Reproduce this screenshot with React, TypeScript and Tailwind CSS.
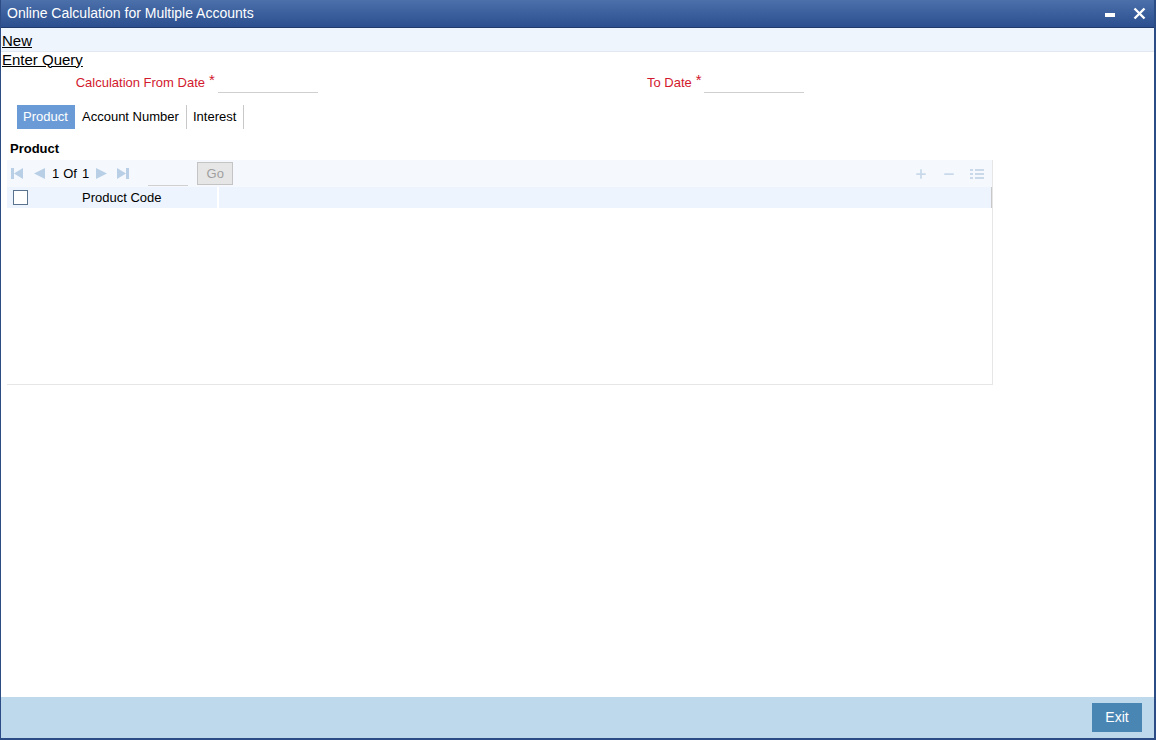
import { Plus, Minus } from 'lucide-react';

const font = { fontFamily: '"Liberation Sans", Arial, sans-serif' };

function PagerIcon({ kind }: { kind: 'first' | 'prev' | 'next' | 'last' }) {
  const fill = '#b9cfe6';
  return (
    <svg width="12" height="13" viewBox="0 0 12 13">
      {kind === 'first' && (
        <>
          <rect x="0" y="1" width="3" height="11" fill={fill} />
          <polygon points="12,1 12,12 3,6.5" fill={fill} />
        </>
      )}
      {kind === 'prev' && <polygon points="12,1 12,12 1,6.5" fill={fill} />}
      {kind === 'next' && <polygon points="0,1 0,12 11,6.5" fill={fill} />}
      {kind === 'last' && (
        <>
          <polygon points="0,1 0,12 9,6.5" fill={fill} />
          <rect x="9" y="1" width="3" height="11" fill={fill} />
        </>
      )}
    </svg>
  );
}

function ListIcon() {
  const c = '#c9d9ea';
  return (
    <svg width="14" height="12" viewBox="0 0 14 12">
      <rect x="0" y="1" width="3" height="2" fill={c} />
      <rect x="5" y="1" width="9" height="2" fill={c} />
      <rect x="0" y="5" width="3" height="2" fill={c} />
      <rect x="5" y="5" width="9" height="2" fill={c} />
      <rect x="0" y="9" width="3" height="2" fill={c} />
      <rect x="5" y="9" width="9" height="2" fill={c} />
    </svg>
  );
}

export default function App() {
  return (
    <div
      className="w-[1156px] h-[740px] flex flex-col bg-white border-l border-r-2 border-b-2 border-[#2b4c85] overflow-hidden"
      style={font}
    >
      {/* title bar */}
      <div className="h-[28px] shrink-0 flex items-center justify-between bg-gradient-to-b from-[#4b70aa] to-[#2c4f8f] border-b border-[#1f3a6b] pl-[6px] pr-[8px]">
        <span className="text-white text-[14px]">Online Calculation for Multiple Accounts</span>
        <div className="flex items-center gap-[18px]">
          <div className="w-[10px] h-[4px] bg-white mt-[2px]" />
          <svg width="13" height="13" viewBox="0 0 13 13">
            <path d="M1.5 1.5 L11.5 11.5 M11.5 1.5 L1.5 11.5" stroke="white" strokeWidth="2.4" />
          </svg>
        </div>
      </div>

      {/* toolbar */}
      <div className="h-[24px] shrink-0 bg-[#eef5fd] border-b border-[#e2e8ef] flex items-center">
        <span className="text-[15px] underline text-black pl-px leading-none mt-[2px]">New</span>
      </div>
      <div className="h-[16px] flex items-center">
        <span className="text-[15px] underline text-black pl-px leading-none mt-[-2px]">Enter Query</span>
      </div>

      {/* dates */}
      <div className="flex items-end h-[27px] text-[13px] text-[#d2192e]">
        <div className="w-[204px] text-right pb-[3px]">Calculation From Date</div>
        <span className="ml-[4px] mb-[8px] text-[15px] leading-none">*</span>
        <div className="ml-[3px] w-[100px] h-[18px] border-b border-[#cfcfcf] mb-[2px]" />
        <div className="w-[374px] text-right pb-[3px]">To Date</div>
        <span className="ml-[4px] mb-[8px] text-[15px] leading-none">*</span>
        <div className="ml-[2px] w-[100px] h-[18px] border-b border-[#cfcfcf] mb-[2px]" />
      </div>

      {/* tabs */}
      <div className="flex items-stretch h-[24px] mt-[10px] ml-[16px] text-[13px]">
        <div className="bg-[#6b9bd6] text-white pl-[6px] flex items-center w-[58px]">Product</div>
        <div className="pl-[7px] w-[112px] flex items-center border-r border-[#c8c8c8]">Account Number</div>
        <div className="pl-[6px] w-[57px] flex items-center border-r border-[#c8c8c8]">Interest</div>
      </div>

      <div className="text-[13px] font-bold text-black ml-[9px] mt-[12px] leading-[16px]">Product</div>

      {/* grid */}
      <div className="ml-[6px] mt-[3px] w-[986px] h-[225px] border-r border-b border-[#e6e6e6] flex flex-col">
        <div className="h-[27px] bg-[#f5f9fe] flex items-center text-[13px]">
          <div className="flex items-center gap-[10px] ml-[4px]">
            <PagerIcon kind="first" />
            <PagerIcon kind="prev" />
          </div>
          <span className="ml-[7px]">1</span>
          <span className="ml-[4px]">Of</span>
          <span className="ml-[5px]">1</span>
          <div className="flex items-center gap-[9px] ml-[7px]">
            <PagerIcon kind="next" />
            <PagerIcon kind="last" />
          </div>
          <div className="ml-[19px] w-[40px] h-[22px] border-b border-[#d0d0d0] self-end mb-[1px]" />
          <div className="ml-[9px] w-[36px] h-[23px] bg-[#e6e6e6] border border-[#c4c4c4] text-[#a0a0a0] flex items-center justify-center">
            Go
          </div>
          <div className="ml-auto flex items-center gap-[14px] mr-[8px] text-[#c9d9ea]">
            <Plus size={14} strokeWidth={3} />
            <Minus size={14} strokeWidth={3} />
            <ListIcon />
          </div>
        </div>
        <div className="h-[21px] bg-[#edf4fd] flex items-stretch text-[13px]">
          <div className="w-[29px] flex items-center">
            <div className="ml-[6px] w-[15px] h-[15px] border border-[#5a7490] bg-white" />
          </div>
          <div className="w-[183px] border-r-2 border-white flex items-center pl-[46px]">Product Code</div>
          <div className="flex-1 border-r border-[#c8c8c8]" />
        </div>
      </div>

      <div className="flex-1" />

      {/* footer */}
      <div className="h-[41px] shrink-0 bg-[#bed9ec] flex items-center justify-end pr-[12px]">
        <div className="w-[50px] h-[29px] bg-[#4a86b4] text-white text-[14px] flex items-center justify-center">Exit</div>
      </div>
    </div>
  );
}
